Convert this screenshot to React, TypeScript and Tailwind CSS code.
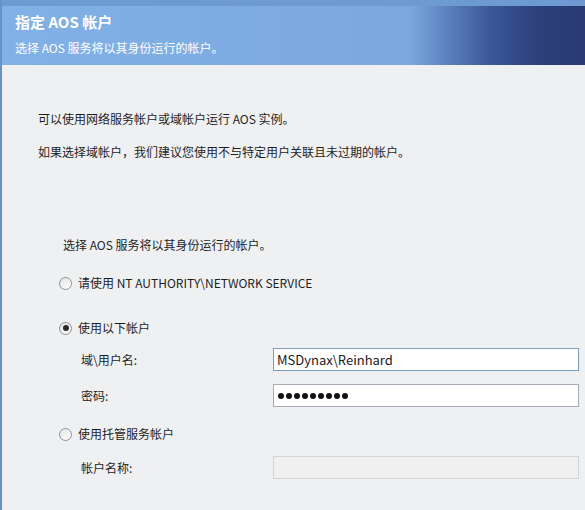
import React from 'react';

const font = { fontFamily: '"Noto Sans CJK SC", "Noto Sans", sans-serif' };

function Radio({ checked, label }: { checked?: boolean; label: string }) {
  return (
    <div className="flex items-center h-4 ml-[21px]">
      <span className="w-[13px] h-[13px] rounded-full border border-[#8f9192] bg-gradient-to-br from-[#e2e3e4] to-white flex items-center justify-center">
        {checked && <span className="w-[6px] h-[6px] rounded-full bg-[#2a2a2a]" />}
      </span>
      <span className="ml-[6px] text-[12px] leading-4 text-[#1e1e1e]">{label}</span>
    </div>
  );
}

function Field({ label, children, className }: { label: string; children?: React.ReactNode; className: string }) {
  return (
    <div className="flex items-center">
      <span className="ml-[43px] w-[192px] text-[12px] leading-4 text-[#1e1e1e]">{label}</span>
      <div className={`w-[306px] h-[23px] border flex items-center px-[3px] text-[13px] text-[#1a1a1a] ${className}`}>
        {children}
      </div>
    </div>
  );
}

export default function App() {
  return (
    <div className="w-[585px] h-[510px] overflow-hidden flex flex-col border-l-2 border-[#6591cc] bg-[#eff0f2]" style={font}>
      <div className="h-[65px] shrink-0 border-t-[6px] border-[#6e9ad2] bg-[linear-gradient(to_right,#81b1e7_0%,#7aa7de_70%,#5577b5_78%,#3a5798_84%,#2c3f7a_92%,#2a3a72_100%)] pl-[13px] pt-[6px]">
        <div className="text-[15px] leading-5 font-bold text-white">指定 AOS 帐户</div>
        <div className="mt-[8px] text-[12px] leading-4 text-white">选择 AOS 服务将以其身份运行的帐户。</div>
      </div>
      <div className="flex flex-col pl-[36px]">
        <div className="mt-[46px] text-[12px] leading-4 text-[#1e1e1e]">可以使用网络服务帐户或域帐户运行 AOS 实例。</div>
        <div className="mt-[17px] text-[12px] leading-4 text-[#1e1e1e]">如果选择域帐户，我们建议您使用不与特定用户关联且未过期的帐户。</div>
      </div>
      <div className="flex flex-col">
        <div className="mt-[77px] ml-[25px] pl-[36px] text-[12px] leading-4 text-[#1e1e1e]">选择 AOS 服务将以其身份运行的帐户。</div>
        <div className="mt-[22px] pl-[36px]">
          <Radio label="请使用 NT AUTHORITY\NETWORK SERVICE" />
        </div>
        <div className="mt-[29px] pl-[36px]">
          <Radio checked label="使用以下帐户" />
        </div>
        <div className="mt-[12px] pl-[36px]">
          <Field label="域\用户名:" className="bg-white border-[#7f9db9]">MSDynax\Reinhard</Field>
        </div>
        <div className="mt-[13px] pl-[36px]">
          <Field label="密码:" className="bg-white border-[#a5acb5]">
            <div className="flex gap-[2px] ml-[1px]">
              {Array.from({ length: 9 }).map((_, i) => (
                <span key={i} className="w-[6px] h-[6px] rounded-full bg-[#111]" />
              ))}
            </div>
          </Field>
        </div>
        <div className="mt-[19px] pl-[36px]">
          <Radio label="使用托管服务帐户" />
        </div>
        <div className="mt-[14px] pl-[36px]">
          <Field label="帐户名称:" className="bg-[#f0f0f0] border-[#d0d3d8]" />
        </div>
      </div>
    </div>
  );
}
